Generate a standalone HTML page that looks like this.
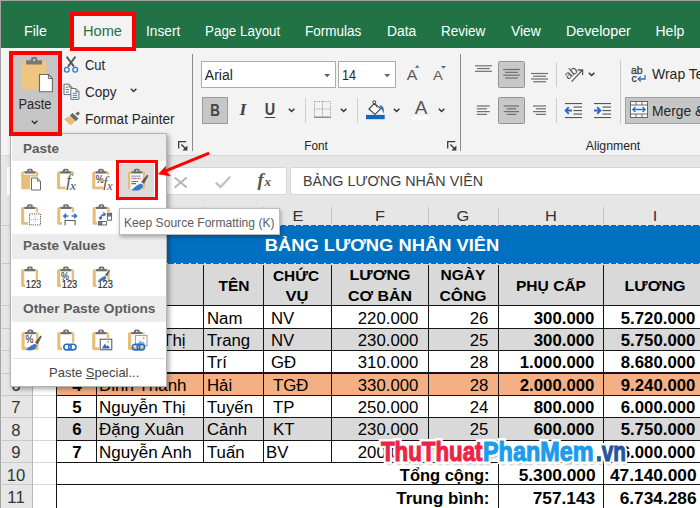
<!DOCTYPE html>
<html lang="vi"><head><meta charset="utf-8"><title>Excel - Paste Keep Source Formatting</title>
<style>
html,body{margin:0;padding:0}
body{width:700px;height:508px;position:relative;overflow:hidden;background:#fff;font-family:"Liberation Sans",sans-serif}
.a{position:absolute}
.t{position:absolute;white-space:nowrap;line-height:1;display:block}
svg{overflow:visible}
</style></head><body>
<div class="a" style="left:0px;top:155px;width:700px;height:50px;background:#e6e6e6;"></div>
<div class="a" style="left:0px;top:205px;width:33px;height:303px;background:#e6e6e6;"></div>
<div class="a" style="left:32px;top:205px;width:1.2px;height:303px;background:#b8b8b8;"></div>
<div class="a" style="left:33px;top:263.4px;width:23px;height:1px;background:#d6d6d6;"></div>
<div class="a" style="left:33px;top:304.9px;width:23px;height:1px;background:#d6d6d6;"></div>
<div class="a" style="left:33px;top:327.7px;width:23px;height:1px;background:#d6d6d6;"></div>
<div class="a" style="left:33px;top:349.9px;width:23px;height:1px;background:#d6d6d6;"></div>
<div class="a" style="left:33px;top:372.5px;width:23px;height:1px;background:#d6d6d6;"></div>
<div class="a" style="left:33px;top:394.9px;width:23px;height:1px;background:#d6d6d6;"></div>
<div class="a" style="left:33px;top:417.2px;width:23px;height:1px;background:#d6d6d6;"></div>
<div class="a" style="left:33px;top:439.6px;width:23px;height:1px;background:#d6d6d6;"></div>
<div class="a" style="left:33px;top:462.0px;width:23px;height:1px;background:#d6d6d6;"></div>
<div class="a" style="left:33px;top:484.4px;width:23px;height:1px;background:#d6d6d6;"></div>
<div class="a" style="left:33px;top:509.5px;width:23px;height:1px;background:#d6d6d6;"></div>
<div class="a" style="left:2px;top:224.8px;width:30px;height:1px;background:#c9c9c9;"></div>
<div class="a" style="left:2px;top:263.4px;width:30px;height:1px;background:#c9c9c9;"></div>
<div class="a" style="left:2px;top:304.9px;width:30px;height:1px;background:#c9c9c9;"></div>
<div class="a" style="left:2px;top:327.7px;width:30px;height:1px;background:#c9c9c9;"></div>
<div class="a" style="left:2px;top:349.9px;width:30px;height:1px;background:#c9c9c9;"></div>
<div class="a" style="left:2px;top:372.5px;width:30px;height:1px;background:#c9c9c9;"></div>
<div class="a" style="left:2px;top:394.9px;width:30px;height:1px;background:#c9c9c9;"></div>
<div class="a" style="left:2px;top:417.2px;width:30px;height:1px;background:#c9c9c9;"></div>
<div class="a" style="left:2px;top:439.6px;width:30px;height:1px;background:#c9c9c9;"></div>
<div class="a" style="left:2px;top:462.0px;width:30px;height:1px;background:#c9c9c9;"></div>
<div class="a" style="left:2px;top:484.4px;width:30px;height:1px;background:#c9c9c9;"></div>
<div class="a" style="left:2px;top:509.5px;width:30px;height:1px;background:#c9c9c9;"></div>
<span class="t" style="top:237.26px;font-size:16px;color:#333;left:16.20px;transform-origin:50% 50%;transform:translateX(-50%) scaleX(1.0400);">1</span>
<span class="t" style="top:277.26px;font-size:16px;color:#333;left:16.20px;transform-origin:50% 50%;transform:translateX(-50%) scaleX(1.0400);">2</span>
<span class="t" style="top:310.96px;font-size:16px;color:#333;left:16.20px;transform-origin:50% 50%;transform:translateX(-50%) scaleX(1.0400);">3</span>
<span class="t" style="top:333.16px;font-size:16px;color:#333;left:16.20px;transform-origin:50% 50%;transform:translateX(-50%) scaleX(1.0400);">4</span>
<span class="t" style="top:355.76px;font-size:16px;color:#333;left:16.20px;transform-origin:50% 50%;transform:translateX(-50%) scaleX(1.0400);">5</span>
<span class="t" style="top:378.16px;font-size:16px;color:#333;left:16.20px;transform-origin:50% 50%;transform:translateX(-50%) scaleX(1.0400);">6</span>
<span class="t" style="top:400.46px;font-size:16px;color:#333;left:16.20px;transform-origin:50% 50%;transform:translateX(-50%) scaleX(1.0400);">7</span>
<span class="t" style="top:422.86px;font-size:16px;color:#333;left:16.20px;transform-origin:50% 50%;transform:translateX(-50%) scaleX(1.0400);">8</span>
<span class="t" style="top:445.26px;font-size:16px;color:#333;left:16.20px;transform-origin:50% 50%;transform:translateX(-50%) scaleX(1.0400);">9</span>
<span class="t" style="top:467.66px;font-size:16px;color:#333;left:16.20px;transform-origin:50% 50%;transform:translateX(-50%) scaleX(1.0400);">10</span>
<span class="t" style="top:489.96px;font-size:16px;color:#333;left:16.20px;transform-origin:50% 50%;transform:translateX(-50%) scaleX(1.0400);">11</span>
<div class="a" style="left:56px;top:225px;width:650px;height:39px;background:#0070c0;"></div>
<span class="t" style="top:236.61px;font-size:17px;color:#fff;font-weight:700;left:381.60px;transform-origin:50% 50%;transform:translateX(-50%) scaleX(1.0782);">BẢNG LƯƠNG NHÂN VIÊN</span>
<div class="a" style="left:56px;top:224.8px;width:650px;height:1.2px;background:repeating-linear-gradient(90deg,#1e7a3c 0 5.5px,#dfeadf 5.5px 7.5px)"></div>
<div class="a" style="left:56px;top:263.3px;width:650px;height:1.2px;background:repeating-linear-gradient(90deg,#1e7a3c 0 5.5px,#dfeadf 5.5px 7.5px)"></div>
<div class="a" style="left:56px;top:264.4px;width:650px;height:41px;background:#d9d9d9;"></div>
<div class="a" style="left:56px;top:328.2px;width:650px;height:22.19999999999999px;background:#d9d9d9;"></div>
<div class="a" style="left:56px;top:373.0px;width:650px;height:22.399999999999977px;background:#f4b084;"></div>
<div class="a" style="left:56px;top:417.7px;width:650px;height:22.400000000000034px;background:#d9d9d9;"></div>
<div class="a" style="left:56px;top:304.79999999999995px;width:650px;height:1.2px;background:#141414;"></div>
<div class="a" style="left:56px;top:327.59999999999997px;width:650px;height:1.2px;background:#141414;"></div>
<div class="a" style="left:56px;top:349.79999999999995px;width:650px;height:1.2px;background:#141414;"></div>
<div class="a" style="left:56px;top:372.4px;width:650px;height:1.2px;background:#141414;"></div>
<div class="a" style="left:56px;top:394.79999999999995px;width:650px;height:1.2px;background:#141414;"></div>
<div class="a" style="left:56px;top:417.09999999999997px;width:650px;height:1.2px;background:#141414;"></div>
<div class="a" style="left:56px;top:439.5px;width:650px;height:1.2px;background:#141414;"></div>
<div class="a" style="left:56px;top:461.9px;width:650px;height:1.2px;background:#141414;"></div>
<div class="a" style="left:56px;top:484.29999999999995px;width:650px;height:1.2px;background:#141414;"></div>
<div class="a" style="left:56px;top:509.4px;width:650px;height:1.2px;background:#141414;"></div>
<div class="a" style="left:55.9px;top:264.5px;width:1.2px;height:198.0px;background:#141414;"></div>
<div class="a" style="left:95.9px;top:264.5px;width:1.2px;height:198.0px;background:#141414;"></div>
<div class="a" style="left:203.0px;top:264.5px;width:1.2px;height:198.0px;background:#141414;"></div>
<div class="a" style="left:262.9px;top:264.5px;width:1.2px;height:198.0px;background:#141414;"></div>
<div class="a" style="left:330.79999999999995px;top:264.5px;width:1.2px;height:198.0px;background:#141414;"></div>
<div class="a" style="left:428.0px;top:264.5px;width:1.2px;height:198.0px;background:#141414;"></div>
<div class="a" style="left:498.2px;top:264.5px;width:1.2px;height:198.0px;background:#141414;"></div>
<div class="a" style="left:602.9px;top:264.5px;width:1.2px;height:198.0px;background:#141414;"></div>
<div class="a" style="left:55.9px;top:462.5px;width:1.2px;height:47.5px;background:#141414;"></div>
<div class="a" style="left:498.2px;top:462.5px;width:1.2px;height:47.5px;background:#141414;"></div>
<div class="a" style="left:602.9px;top:462.5px;width:1.2px;height:47.5px;background:#141414;"></div>
<span class="t" style="top:278.20px;font-size:15px;color:#000;font-weight:700;left:233.50px;transform-origin:50% 50%;transform:translateX(-50%) scaleX(1.0333);">TÊN</span>
<span class="t" style="top:267.70px;font-size:15px;color:#000;font-weight:700;left:296.30px;transform-origin:50% 50%;transform:translateX(-50%) scaleX(1.0233);">CHỨC</span>
<span class="t" style="top:288.00px;font-size:15px;color:#000;font-weight:700;left:297.00px;transform-origin:50% 50%;transform:translateX(-50%) scaleX(1.1034);">VỤ</span>
<span class="t" style="top:267.30px;font-size:15px;color:#000;font-weight:700;left:379.50px;transform-origin:50% 50%;transform:translateX(-50%) scaleX(1.0719);">LƯƠNG</span>
<span class="t" style="top:288.30px;font-size:15px;color:#000;font-weight:700;left:379.50px;transform-origin:50% 50%;transform:translateX(-50%) scaleX(1.0614);">CƠ BẢN</span>
<span class="t" style="top:267.30px;font-size:15px;color:#000;font-weight:700;left:463.00px;transform-origin:50% 50%;transform:translateX(-50%) scaleX(1.0382);">NGÀY</span>
<span class="t" style="top:288.30px;font-size:15px;color:#000;font-weight:700;left:463.00px;transform-origin:50% 50%;transform:translateX(-50%) scaleX(1.0444);">CÔNG</span>
<span class="t" style="top:278.30px;font-size:15px;color:#000;font-weight:700;left:551.00px;transform-origin:50% 50%;transform:translateX(-50%) scaleX(1.0368);">PHỤ CẤP</span>
<span class="t" style="top:278.30px;font-size:15px;color:#000;font-weight:700;left:655.00px;transform-origin:50% 50%;transform:translateX(-50%) scaleX(1.0719);">LƯƠNG</span>
<span class="t" style="top:310.59px;font-size:15.6px;color:#000;font-weight:700;left:76.50px;transform-origin:50% 50%;transform:translateX(-50%) scaleX(1.0750);">1</span>
<span class="t" style="top:310.59px;font-size:15.6px;color:#000;left:98.60px;transform-origin:0 50%;transform:scaleX(1.0900);">Lê Văn</span>
<span class="t" style="top:310.59px;font-size:15.6px;color:#000;left:206.80px;transform-origin:0 50%;transform:scaleX(1.0750);">Nam</span>
<span class="t" style="top:310.59px;font-size:15.6px;color:#000;left:271.40px;transform-origin:0 50%;transform:scaleX(1.0750);">NV</span>
<span class="t" style="top:310.59px;font-size:15.6px;color:#000;right:281.80px;transform-origin:100% 50%;transform:scaleX(1.0750);">220.000</span>
<span class="t" style="top:310.59px;font-size:15.6px;color:#000;right:211.80px;transform-origin:100% 50%;transform:scaleX(1.0750);">26</span>
<span class="t" style="top:310.59px;font-size:15.6px;color:#000;font-weight:700;right:105.20px;transform-origin:100% 50%;transform:scaleX(1.0750);">300.000</span>
<span class="t" style="top:310.59px;font-size:15.6px;color:#000;font-weight:700;right:4.60px;transform-origin:100% 50%;transform:scaleX(1.0750);">5.720.000</span>
<span class="t" style="top:332.79px;font-size:15.6px;color:#000;font-weight:700;left:76.50px;transform-origin:50% 50%;transform:translateX(-50%) scaleX(1.0750);">2</span>
<span class="t" style="top:332.79px;font-size:15.6px;color:#000;left:98.60px;transform-origin:0 50%;transform:scaleX(1.0900);">Nguyễn Thị</span>
<span class="t" style="top:332.79px;font-size:15.6px;color:#000;left:206.80px;transform-origin:0 50%;transform:scaleX(1.0750);">Trang</span>
<span class="t" style="top:332.79px;font-size:15.6px;color:#000;left:271.40px;transform-origin:0 50%;transform:scaleX(1.0750);">NV</span>
<span class="t" style="top:332.79px;font-size:15.6px;color:#000;right:281.80px;transform-origin:100% 50%;transform:scaleX(1.0750);">230.000</span>
<span class="t" style="top:332.79px;font-size:15.6px;color:#000;right:211.80px;transform-origin:100% 50%;transform:scaleX(1.0750);">25</span>
<span class="t" style="top:332.79px;font-size:15.6px;color:#000;font-weight:700;right:105.20px;transform-origin:100% 50%;transform:scaleX(1.0750);">300.000</span>
<span class="t" style="top:332.79px;font-size:15.6px;color:#000;font-weight:700;right:4.60px;transform-origin:100% 50%;transform:scaleX(1.0750);">5.750.000</span>
<span class="t" style="top:355.39px;font-size:15.6px;color:#000;font-weight:700;left:76.50px;transform-origin:50% 50%;transform:translateX(-50%) scaleX(1.0750);">3</span>
<span class="t" style="top:355.39px;font-size:15.6px;color:#000;left:98.60px;transform-origin:0 50%;transform:scaleX(1.0900);">Lê Minh</span>
<span class="t" style="top:355.39px;font-size:15.6px;color:#000;left:206.80px;transform-origin:0 50%;transform:scaleX(1.0750);">Trí</span>
<span class="t" style="top:355.39px;font-size:15.6px;color:#000;left:271.40px;transform-origin:0 50%;transform:scaleX(1.0750);">GĐ</span>
<span class="t" style="top:355.39px;font-size:15.6px;color:#000;right:281.80px;transform-origin:100% 50%;transform:scaleX(1.0750);">310.000</span>
<span class="t" style="top:355.39px;font-size:15.6px;color:#000;right:211.80px;transform-origin:100% 50%;transform:scaleX(1.0750);">28</span>
<span class="t" style="top:355.39px;font-size:15.6px;color:#000;font-weight:700;right:105.20px;transform-origin:100% 50%;transform:scaleX(1.0750);">1.000.000</span>
<span class="t" style="top:355.39px;font-size:15.6px;color:#000;font-weight:700;right:4.60px;transform-origin:100% 50%;transform:scaleX(1.0750);">8.680.000</span>
<span class="t" style="top:377.79px;font-size:15.6px;color:#000;font-weight:700;left:76.50px;transform-origin:50% 50%;transform:translateX(-50%) scaleX(1.0750);">4</span>
<span class="t" style="top:377.79px;font-size:15.6px;color:#000;left:98.60px;transform-origin:0 50%;transform:scaleX(1.0900);">Đinh Thanh</span>
<span class="t" style="top:377.79px;font-size:15.6px;color:#000;left:206.80px;transform-origin:0 50%;transform:scaleX(1.0750);">Hải</span>
<span class="t" style="top:377.79px;font-size:15.6px;color:#000;left:273.40px;transform-origin:0 50%;transform:scaleX(1.0750);">TGĐ</span>
<span class="t" style="top:377.79px;font-size:15.6px;color:#000;right:281.80px;transform-origin:100% 50%;transform:scaleX(1.0750);">330.000</span>
<span class="t" style="top:377.79px;font-size:15.6px;color:#000;right:211.80px;transform-origin:100% 50%;transform:scaleX(1.0750);">28</span>
<span class="t" style="top:377.79px;font-size:15.6px;color:#000;font-weight:700;right:105.20px;transform-origin:100% 50%;transform:scaleX(1.0750);">2.000.000</span>
<span class="t" style="top:377.79px;font-size:15.6px;color:#000;font-weight:700;right:4.60px;transform-origin:100% 50%;transform:scaleX(1.0750);">9.240.000</span>
<span class="t" style="top:400.09px;font-size:15.6px;color:#000;font-weight:700;left:76.50px;transform-origin:50% 50%;transform:translateX(-50%) scaleX(1.0750);">5</span>
<span class="t" style="top:400.09px;font-size:15.6px;color:#000;left:98.60px;transform-origin:0 50%;transform:scaleX(1.0900);">Nguyễn Thị</span>
<span class="t" style="top:400.09px;font-size:15.6px;color:#000;left:206.80px;transform-origin:0 50%;transform:scaleX(1.0750);">Tuyến</span>
<span class="t" style="top:400.09px;font-size:15.6px;color:#000;left:272.90px;transform-origin:0 50%;transform:scaleX(1.0750);">TP</span>
<span class="t" style="top:400.09px;font-size:15.6px;color:#000;right:281.80px;transform-origin:100% 50%;transform:scaleX(1.0750);">250.000</span>
<span class="t" style="top:400.09px;font-size:15.6px;color:#000;right:211.80px;transform-origin:100% 50%;transform:scaleX(1.0750);">24</span>
<span class="t" style="top:400.09px;font-size:15.6px;color:#000;font-weight:700;right:105.20px;transform-origin:100% 50%;transform:scaleX(1.0750);">800.000</span>
<span class="t" style="top:400.09px;font-size:15.6px;color:#000;font-weight:700;right:4.60px;transform-origin:100% 50%;transform:scaleX(1.0750);">6.000.000</span>
<span class="t" style="top:422.49px;font-size:15.6px;color:#000;font-weight:700;left:76.50px;transform-origin:50% 50%;transform:translateX(-50%) scaleX(1.0750);">6</span>
<span class="t" style="top:422.49px;font-size:15.6px;color:#000;left:98.60px;transform-origin:0 50%;transform:scaleX(1.0900);">Đặng Xuân</span>
<span class="t" style="top:422.49px;font-size:15.6px;color:#000;left:206.80px;transform-origin:0 50%;transform:scaleX(1.0750);">Cảnh</span>
<span class="t" style="top:422.49px;font-size:15.6px;color:#000;left:272.90px;transform-origin:0 50%;transform:scaleX(1.0750);">KT</span>
<span class="t" style="top:422.49px;font-size:15.6px;color:#000;right:281.80px;transform-origin:100% 50%;transform:scaleX(1.0750);">230.000</span>
<span class="t" style="top:422.49px;font-size:15.6px;color:#000;right:211.80px;transform-origin:100% 50%;transform:scaleX(1.0750);">25</span>
<span class="t" style="top:422.49px;font-size:15.6px;color:#000;font-weight:700;right:105.20px;transform-origin:100% 50%;transform:scaleX(1.0750);">600.000</span>
<span class="t" style="top:422.49px;font-size:15.6px;color:#000;font-weight:700;right:4.60px;transform-origin:100% 50%;transform:scaleX(1.0750);">5.750.000</span>
<span class="t" style="top:444.89px;font-size:15.6px;color:#000;font-weight:700;left:76.50px;transform-origin:50% 50%;transform:translateX(-50%) scaleX(1.0750);">7</span>
<span class="t" style="top:444.89px;font-size:15.6px;color:#000;left:98.60px;transform-origin:0 50%;transform:scaleX(1.0900);">Nguyễn Anh</span>
<span class="t" style="top:444.89px;font-size:15.6px;color:#000;left:206.80px;transform-origin:0 50%;transform:scaleX(1.0750);">Tuấn</span>
<span class="t" style="top:444.89px;font-size:15.6px;color:#000;left:266.40px;transform-origin:0 50%;transform:scaleX(1.0750);">BV</span>
<span class="t" style="top:444.89px;font-size:15.6px;color:#000;right:281.80px;transform-origin:100% 50%;transform:scaleX(1.0750);">200.000</span>
<span class="t" style="top:444.89px;font-size:15.6px;color:#000;right:211.80px;transform-origin:100% 50%;transform:scaleX(1.0750);">27</span>
<span class="t" style="top:444.89px;font-size:15.6px;color:#000;font-weight:700;right:105.20px;transform-origin:100% 50%;transform:scaleX(1.0750);">300.000</span>
<span class="t" style="top:444.89px;font-size:15.6px;color:#000;font-weight:700;right:4.60px;transform-origin:100% 50%;transform:scaleX(1.0750);">6.000.000</span>
<span class="t" style="top:467.27px;font-size:16.1px;color:#000;font-weight:700;right:210.20px;transform-origin:100% 50%;transform:scaleX(1.0250);">Tổng cộng:</span>
<span class="t" style="top:467.27px;font-size:16.1px;color:#000;font-weight:700;right:104.80px;transform-origin:100% 50%;transform:scaleX(1.0750);">5.300.000</span>
<span class="t" style="top:467.27px;font-size:16.1px;color:#000;font-weight:700;right:3.20px;transform-origin:100% 50%;transform:scaleX(1.0750);">47.140.000</span>
<span class="t" style="top:489.67px;font-size:16.1px;color:#000;font-weight:700;right:210.20px;transform-origin:100% 50%;transform:scaleX(1.0542);">Trung bình:</span>
<span class="t" style="top:489.67px;font-size:16.1px;color:#000;font-weight:700;right:104.80px;transform-origin:100% 50%;transform:scaleX(1.0750);">757.143</span>
<span class="t" style="top:489.67px;font-size:16.1px;color:#000;font-weight:700;right:3.20px;transform-origin:100% 50%;transform:scaleX(1.0750);">6.734.286</span>
<div class="a" style="left:0px;top:204px;width:700px;height:21px;background:#e6e6e6;"></div>
<div class="a" style="left:56.0px;top:207px;width:1px;height:17px;background:#c4c4c4;"></div>
<div class="a" style="left:96.0px;top:207px;width:1px;height:17px;background:#c4c4c4;"></div>
<div class="a" style="left:203.1px;top:207px;width:1px;height:17px;background:#c4c4c4;"></div>
<div class="a" style="left:263.0px;top:207px;width:1px;height:17px;background:#c4c4c4;"></div>
<div class="a" style="left:330.9px;top:207px;width:1px;height:17px;background:#c4c4c4;"></div>
<div class="a" style="left:428.1px;top:207px;width:1px;height:17px;background:#c4c4c4;"></div>
<div class="a" style="left:498.3px;top:207px;width:1px;height:17px;background:#c4c4c4;"></div>
<div class="a" style="left:603.0px;top:207px;width:1px;height:17px;background:#c4c4c4;"></div>
<span class="t" style="top:207.88px;font-size:15.5px;color:#333;left:297.50px;transform-origin:50% 50%;transform:translateX(-50%) scaleX(1.0600);">E</span>
<span class="t" style="top:207.88px;font-size:15.5px;color:#333;left:379.50px;transform-origin:50% 50%;transform:translateX(-50%) scaleX(1.0600);">F</span>
<span class="t" style="top:207.88px;font-size:15.5px;color:#333;left:463.00px;transform-origin:50% 50%;transform:translateX(-50%) scaleX(1.0600);">G</span>
<span class="t" style="top:207.88px;font-size:15.5px;color:#333;left:551.00px;transform-origin:50% 50%;transform:translateX(-50%) scaleX(1.0600);">H</span>
<span class="t" style="top:207.88px;font-size:15.5px;color:#333;left:655.00px;transform-origin:50% 50%;transform:translateX(-50%) scaleX(1.0600);">I</span>
<span class="t" style="top:207.88px;font-size:15.5px;color:#333;left:233.50px;transform-origin:50% 50%;transform:translateX(-50%) scaleX(1.0600);">D</span>
<div class="a" style="left:7px;top:166.9px;width:160px;height:28.2px;background:#fff;"></div>
<div class="a" style="left:160px;top:166.9px;width:127.4px;height:28.2px;background:#fff;border:1px solid #d6d6d6;box-sizing:border-box;border-radius:2px;"></div>
<div class="a" style="left:290px;top:166.9px;width:420px;height:28.2px;background:#fff;border:1px solid #d6d6d6;box-sizing:border-box;border-radius:2px;"></div>
<span class="t" style="top:174.17px;font-size:14.8px;color:#404040;left:303.20px;transform-origin:0 50%;transform:scaleX(0.9652);">BẢNG LƯƠNG NHÂN VIÊN</span>
<svg class="a" style="left:174px;top:176.8px;" width="13.4" height="10.8" viewBox="0 0 13.4 10.8"><path d="M0.7 0.4 L12.7 10.4 M12.7 0.4 L0.7 10.4" stroke="#b6b6b6" stroke-width="2" fill="none"/></svg>
<svg class="a" style="left:215.3px;top:176px;" width="16" height="12.2" viewBox="0 0 16 12.2"><path d="M0.8 6.6 L5.6 11 L15.2 0.8" stroke="#c2c2c2" stroke-width="2.4" fill="none"/></svg>
<span class="t" style="top:170.54px;font-size:18.5px;color:#555;font-weight:700;font-family:'Liberation Serif',serif;font-style:italic;left:257.60px;transform-origin:0 50%;">f</span>
<span class="t" style="top:175.40px;font-size:13px;color:#555;font-weight:700;font-family:'Liberation Serif',serif;font-style:italic;left:264.60px;transform-origin:0 50%;">x</span>
<div class="a" style="left:0px;top:0px;width:700px;height:48.6px;background:#217346;"></div>
<div class="a" style="left:0px;top:48px;width:700px;height:107px;background:#f3f3f3;"></div>
<div class="a" style="left:0px;top:155px;width:700px;height:1px;background:#d8d8d8;"></div>
<span class="t" style="top:23.65px;font-size:14px;color:#fff;left:23.50px;transform-origin:0 50%;transform:scaleX(1.0105);">File</span>
<span class="t" style="top:23.65px;font-size:14px;color:#fff;left:146.00px;transform-origin:0 50%;transform:scaleX(0.9796);">Insert</span>
<span class="t" style="top:23.65px;font-size:14px;color:#fff;left:205.00px;transform-origin:0 50%;transform:scaleX(0.9577);">Page Layout</span>
<span class="t" style="top:23.65px;font-size:14px;color:#fff;left:305.00px;transform-origin:0 50%;transform:scaleX(0.9647);">Formulas</span>
<span class="t" style="top:23.65px;font-size:14px;color:#fff;left:387.00px;transform-origin:0 50%;transform:scaleX(0.9906);">Data</span>
<span class="t" style="top:23.65px;font-size:14px;color:#fff;left:441.00px;transform-origin:0 50%;transform:scaleX(0.9650);">Review</span>
<span class="t" style="top:23.65px;font-size:14px;color:#fff;left:510.50px;transform-origin:0 50%;transform:scaleX(0.9902);">View</span>
<span class="t" style="top:23.65px;font-size:14px;color:#fff;left:565.50px;transform-origin:0 50%;transform:scaleX(1.0152);">Developer</span>
<span class="t" style="top:23.65px;font-size:14px;color:#fff;left:655.50px;transform-origin:0 50%;">Help</span>
<div class="a" style="left:70px;top:12px;width:66px;height:38px;background:#f3f3f3;"></div>
<span class="t" style="top:23.65px;font-size:14px;color:#217346;left:83.00px;transform-origin:0 50%;transform:scaleX(1.0439);">Home</span>
<div class="a" style="left:13px;top:54.5px;width:45px;height:78px;background:#c6c6c6;"></div>
<span class="t" style="top:97.45px;font-size:14px;color:#262626;left:35.00px;transform-origin:50% 50%;transform:translateX(-50%) scaleX(0.9215);">Paste</span>
<svg class="a" style="left:30.6px;top:119.9px;" width="7.2" height="4.4" viewBox="0 0 7.2 4.4"><path d="M0.8 0.8 L3.6 3.6 L6.4 0.8" stroke="#333" stroke-width="1.45" fill="none"/></svg>
<span class="t" style="top:58.15px;font-size:14px;color:#262626;left:85.00px;transform-origin:0 50%;transform:scaleX(0.9267);">Cut</span>
<span class="t" style="top:85.45px;font-size:14px;color:#262626;left:85.00px;transform-origin:0 50%;transform:scaleX(0.9667);">Copy</span>
<svg class="a" style="left:130.0px;top:88.2px;" width="7.2" height="4.4" viewBox="0 0 7.2 4.4"><path d="M0.8 0.8 L3.6 3.6 L6.4 0.8" stroke="#333" stroke-width="1.45" fill="none"/></svg>
<span class="t" style="top:111.75px;font-size:14px;color:#262626;left:85.00px;transform-origin:0 50%;transform:scaleX(0.9677);">Format Painter</span>
<svg class="a" style="left:178px;top:141px;" width="10" height="10" viewBox="0 0 10 10"><path d="M0.7 7.6 V0.7 H8.2" stroke="#3a3a3a" stroke-width="1.3" fill="none"/><path d="M3.4 3.4 L8.4 8.4" stroke="#3a3a3a" stroke-width="1.4" fill="none"/><path d="M9.4 4.4 V9.4 H4.4Z" fill="#3a3a3a"/></svg>
<svg class="a" style="left:447px;top:141px;" width="10" height="10" viewBox="0 0 10 10"><path d="M0.7 7.6 V0.7 H8.2" stroke="#3a3a3a" stroke-width="1.3" fill="none"/><path d="M3.4 3.4 L8.4 8.4" stroke="#3a3a3a" stroke-width="1.4" fill="none"/><path d="M9.4 4.4 V9.4 H4.4Z" fill="#3a3a3a"/></svg>
<div class="a" style="left:191.5px;top:53.5px;width:1.2px;height:97px;background:#8a8a8a;"></div>
<div class="a" style="left:460.3px;top:53.5px;width:1.2px;height:97px;background:#8a8a8a;"></div>
<div class="a" style="left:201px;top:61px;width:134.5px;height:26.5px;background:#fff;border:1px solid #ababab;box-sizing:border-box;"></div>
<div class="a" style="left:338px;top:61px;width:58px;height:26.5px;background:#fff;border:1px solid #ababab;box-sizing:border-box;"></div>
<span class="t" style="top:67.65px;font-size:14px;color:#262626;left:204.80px;transform-origin:0 50%;">Arial</span>
<span class="t" style="top:67.65px;font-size:14px;color:#262626;left:342.00px;transform-origin:0 50%;transform:scaleX(0.8987);">14</span>
<svg class="a" style="left:323.5px;top:73.5px;" width="6.4" height="3.4" viewBox="0 0 6.4 3.4"><path d="M0.2 0 H6.2 L3.2 3.2 Z" fill="#606060"/></svg>
<svg class="a" style="left:384px;top:73.5px;" width="6.4" height="3.4" viewBox="0 0 6.4 3.4"><path d="M0.2 0 H6.2 L3.2 3.2 Z" fill="#606060"/></svg>
<div class="a" style="left:201.6px;top:97px;width:26.6px;height:27px;background:#c6c6c6;border:1px solid #9c9c9c;box-sizing:border-box;"></div>
<span class="t" style="top:101.81px;font-size:17px;color:#444;font-weight:700;left:214.80px;transform-origin:50% 50%;transform:translateX(-50%) scaleX(0.7817);">B</span>
<span class="t" style="top:101.39px;font-size:17.5px;color:#444;font-family:'Liberation Serif',serif;font-style:italic;font-weight:700;left:243.00px;transform-origin:50% 50%;transform:translateX(-50%);">I</span>
<span class="t" style="top:101.66px;font-size:16px;color:#444;font-weight:700;text-decoration:underline;text-decoration-thickness:1.3px;text-underline-offset:2px;left:270.00px;transform-origin:50% 50%;transform:translateX(-50%) scaleX(0.8995);">U</span>
<svg class="a" style="left:288.0px;top:108.2px;" width="7.2" height="4.4" viewBox="0 0 7.2 4.4"><path d="M0.8 0.8 L3.6 3.6 L6.4 0.8" stroke="#333" stroke-width="1.45" fill="none"/></svg>
<div class="a" style="left:305px;top:98.2px;width:1px;height:24.6px;background:#cfcfcf;"></div>
<svg class="a" style="left:340.3px;top:108.2px;" width="7.2" height="4.4" viewBox="0 0 7.2 4.4"><path d="M0.8 0.8 L3.6 3.6 L6.4 0.8" stroke="#333" stroke-width="1.45" fill="none"/></svg>
<div class="a" style="left:357px;top:98.2px;width:1px;height:24.6px;background:#cfcfcf;"></div>
<svg class="a" style="left:392.5px;top:108.2px;" width="7.2" height="4.4" viewBox="0 0 7.2 4.4"><path d="M0.8 0.8 L3.6 3.6 L6.4 0.8" stroke="#333" stroke-width="1.45" fill="none"/></svg>
<svg class="a" style="left:438.0px;top:108.2px;" width="7.2" height="4.4" viewBox="0 0 7.2 4.4"><path d="M0.8 0.8 L3.6 3.6 L6.4 0.8" stroke="#333" stroke-width="1.45" fill="none"/></svg>
<span class="t" style="top:139.84px;font-size:12px;color:#262626;left:316.00px;transform-origin:50% 50%;transform:translateX(-50%) scaleX(0.9785);">Font</span>
<svg class="a" style="left:314px;top:101.2px;" width="17" height="17" viewBox="0 0 17 17"><g stroke="#9a9a9a" stroke-width="1" stroke-dasharray="1.1 1.1" fill="none"><path d="M0.5 0.5 H16.5 V15.5 M0.5 0.5 V15.5 M8.5 0.5 V15.5 M0.5 8 H16.5"/></g><path d="M0 16.2 H17" stroke="#6a6a6a" stroke-width="1.1"/></svg>
<svg class="a" style="left:0px;top:0px;" width="700" height="508" viewBox="0 0 700 508"><path d="M368.9 109 L374.4 103.4 L380.7 108.6 L375 114.4Z" fill="#fff" stroke="#444" stroke-width="1.1" stroke-linejoin="round"/>
<circle cx="374.3" cy="102.2" r="1.5" fill="none" stroke="#444" stroke-width="1"/>
<path d="M374.7 103.6 L377.2 107.4" stroke="#444" stroke-width="1"/>
<path d="M379.4 105.2 C383.2 105.4 384.8 109 383.5 113.8 C382.8 110.8 381.8 109.6 380.8 108.6Z" fill="#1f6fc5"/>
<rect x="366" y="114.9" width="18.7" height="4.3" fill="#1565c0"/></svg>
<span class="t" style="top:99.69px;font-size:17.5px;color:#555;left:420.70px;transform-origin:50% 50%;transform:translateX(-50%) scaleX(1.0781);">A</span>
<div class="a" style="left:411.5px;top:115.5px;width:18.5px;height:4.3px;background:#fff;"></div>
<span class="t" style="top:66.88px;font-size:15.5px;color:#5a5a5a;left:411.60px;transform-origin:50% 50%;transform:translateX(-50%) scaleX(1.0248);">A</span>
<svg class="a" style="left:415.2px;top:64.5px;" width="4.4" height="2.8" viewBox="0 0 4.4 2.8"><path d="M0 2.8 L2.2 0 L4.4 2.8Z" fill="#2b73c0"/></svg>
<span class="t" style="top:68.57px;font-size:13.5px;color:#5a5a5a;left:438.30px;transform-origin:50% 50%;transform:translateX(-50%) scaleX(1.0870);">A</span>
<svg class="a" style="left:441.2px;top:66.4px;" width="5" height="2.8" viewBox="0 0 5 2.8"><path d="M0 0 L2.5 2.8 L5 0Z" fill="#2b73c0"/></svg>
<div class="a" style="left:498px;top:60.8px;width:26.8px;height:27px;background:#c8c8c8;border:1px solid #939393;box-sizing:border-box;border-radius:1.5px;"></div>
<div class="a" style="left:498px;top:97px;width:26.8px;height:27.2px;background:#c8c8c8;border:1px solid #939393;box-sizing:border-box;border-radius:1.5px;"></div>
<svg class="a" style="left:0px;top:0px;" width="700" height="508" viewBox="0 0 700 508"><rect x="475" y="65.20" width="16.90" height="1.2" fill="#707070"/><rect x="477.1" y="67.95" width="12.70" height="1.2" fill="#707070"/><rect x="475" y="70.70" width="16.90" height="1.2" fill="#707070"/><rect x="503.1" y="68.90" width="16.90" height="1.2" fill="#707070"/><rect x="505.2" y="71.75" width="12.70" height="1.2" fill="#707070"/><rect x="503.1" y="74.60" width="16.90" height="1.2" fill="#707070"/><rect x="505.2" y="77.45" width="12.70" height="1.2" fill="#707070"/><rect x="531" y="72.90" width="17.00" height="1.2" fill="#707070"/><rect x="533.1" y="75.65" width="12.90" height="1.2" fill="#707070"/><rect x="531" y="78.40" width="17.00" height="1.2" fill="#707070"/><rect x="533.1" y="81.15" width="12.90" height="1.2" fill="#707070"/><rect x="476.8" y="105.40" width="13.00" height="1.2" fill="#707070"/><rect x="476.8" y="108.20" width="10.10" height="1.2" fill="#707070"/><rect x="476.8" y="111.00" width="13.00" height="1.2" fill="#707070"/><rect x="476.8" y="113.80" width="10.10" height="1.2" fill="#707070"/><rect x="503.7" y="105.40" width="15.30" height="1.2" fill="#707070"/><rect x="506.8" y="108.20" width="9.50" height="1.2" fill="#707070"/><rect x="503.7" y="111.00" width="15.30" height="1.2" fill="#707070"/><rect x="506.8" y="113.80" width="9.50" height="1.2" fill="#707070"/><rect x="533" y="105.40" width="13.00" height="1.2" fill="#707070"/><rect x="535.9" y="108.20" width="10.10" height="1.2" fill="#707070"/><rect x="533" y="111.00" width="13.00" height="1.2" fill="#707070"/><rect x="535.9" y="113.80" width="10.10" height="1.2" fill="#707070"/></svg>
<div class="a" style="left:556.1px;top:61.6px;width:1px;height:25.2px;background:#cdcdcd;"></div>
<div class="a" style="left:556.1px;top:98.1px;width:1px;height:25px;background:#cdcdcd;"></div>
<div class="a" style="left:620px;top:60px;width:1px;height:64px;background:#c8c8c8;"></div>
<svg class="a" style="left:0px;top:0px;" width="700" height="508" viewBox="0 0 700 508"><text x="566.6" y="79.2" font-size="12" fill="#4a4a4a" transform="rotate(-40 568.4 77.6)" font-family="Liberation Sans,sans-serif">ab</text><path d="M571.6 81.6 L582.2 70.4 M577.6 70 H582.6 V75" stroke="#555" stroke-width="1.3" fill="none"/></svg>
<svg class="a" style="left:588.4px;top:72.3px;" width="7.2" height="4.4" viewBox="0 0 7.2 4.4"><path d="M0.8 0.8 L3.6 3.6 L6.4 0.8" stroke="#333" stroke-width="1.45" fill="none"/></svg>
<svg class="a" style="left:565.3px;top:102.8px;" width="17" height="15.5" viewBox="0 0 17 15.5"><rect x="0" y="0.0" width="17" height="1.1" fill="#555"/><rect x="8.5" y="3.5" width="8.5" height="1.1" fill="#555"/><rect x="8.5" y="7.0" width="8.5" height="1.1" fill="#555"/><rect x="8.5" y="10.5" width="8.5" height="1.1" fill="#555"/><rect x="0" y="14.0" width="17" height="1.1" fill="#555"/><path d="M0.8 7.5 H7 M3.8 4.2 L0.6 7.5 L3.8 10.8" stroke="#2b6cc4" stroke-width="1.9" fill="none"/></svg>
<svg class="a" style="left:593.7px;top:102.8px;" width="17" height="15.5" viewBox="0 0 17 15.5"><rect x="0" y="0.0" width="17" height="1.1" fill="#555"/><rect x="8.5" y="3.5" width="8.5" height="1.1" fill="#555"/><rect x="8.5" y="7.0" width="8.5" height="1.1" fill="#555"/><rect x="8.5" y="10.5" width="8.5" height="1.1" fill="#555"/><rect x="0" y="14.0" width="17" height="1.1" fill="#555"/><path d="M0 7.5 H6.2 M3.2 4.2 L6.4 7.5 L3.2 10.8" stroke="#2b6cc4" stroke-width="1.9" fill="none"/></svg>
<svg class="a" style="left:631px;top:66.5px;" width="16" height="16" viewBox="0 0 16 16"><text x="0" y="7" font-size="10.5" fill="#333" stroke="#333" stroke-width="0.25" font-family="Liberation Sans,sans-serif">ab</text><text x="0.4" y="15.2" font-size="10.5" fill="#333" stroke="#333" stroke-width="0.25" font-family="Liberation Sans,sans-serif">c</text><path d="M14 8 V12 H7.5 M9.8 9.6 L7.2 12 L9.8 14.4" stroke="#2b73c0" stroke-width="1.3" fill="none"/></svg>
<span class="t" style="top:67.43px;font-size:14.5px;color:#262626;left:651.50px;transform-origin:0 50%;transform:scaleX(0.9653);">Wrap Text</span>
<div class="a" style="left:625.3px;top:97.3px;width:80px;height:26.5px;background:#c6c6c6;border:1px solid #a0a0a0;box-sizing:border-box;"></div>
<svg class="a" style="left:629.5px;top:101.3px;" width="18" height="17" viewBox="0 0 18 17"><rect x="0.5" y="0.5" width="17" height="16" fill="#fff" stroke="#666"/><path d="M0.5 4 H17.5 M0.5 13 H17.5 M6 0.5 V4 M12 0.5 V4 M6 13 V16.5 M12 13 V16.5" stroke="#666" fill="none"/><path d="M3 8.5 H15 M5.4 6 L2.8 8.5 L5.4 11 M12.6 6 L15.2 8.5 L12.6 11" stroke="#2b73c0" stroke-width="1.3" fill="none"/></svg>
<span class="t" style="top:104.03px;font-size:14.5px;color:#262626;left:652.00px;transform-origin:0 50%;transform:scaleX(0.9525);">Merge &amp; Center</span>
<span class="t" style="top:139.84px;font-size:12px;color:#262626;left:613.30px;transform-origin:50% 50%;transform:translateX(-50%) scaleX(1.0211);">Alignment</span>
<svg class="a" style="left:0px;top:0px;" width="700" height="508" viewBox="0 0 700 508">
<rect x="21.6" y="60.8" width="24.8" height="28.8" rx="1.2" fill="#eec682"/>
<rect x="31" y="57" width="6.3" height="5" rx="1.6" fill="#787878"/>
<rect x="26" y="60.2" width="16" height="4.4" rx="0.9" fill="#787878"/>
<rect x="33.1" y="58.9" width="2.2" height="2.2" fill="#c6c6c6"/>
<path d="M39.5 74.5 H48.4 L52.4 78.5 V91.8 H39.5Z" fill="#fff" stroke="#6a6a6a" stroke-width="1.1" stroke-linejoin="round"/>
<path d="M48.4 74.7 V78.5 H52.2" fill="none" stroke="#6a6a6a" stroke-width="1"/>
<path d="M66.6 56.6 L74 66.6 M75.4 56.6 L68 66.6" stroke="#555" stroke-width="1.8" fill="none"/>
<circle cx="66.8" cy="69.7" r="2.4" fill="none" stroke="#3a76c4" stroke-width="1.3"/>
<circle cx="75.2" cy="69.7" r="2.4" fill="none" stroke="#3a76c4" stroke-width="1.3"/>
<path d="M64 84.2 H69 L72 87.2 V94.6 H64Z" fill="#fff" stroke="#6a6a6a" stroke-width="1"/>
<path d="M69 84.4 V87.2 H71.8" fill="none" stroke="#6a6a6a" stroke-width="0.9"/>
<path d="M70.9 88.5 H75.9 L78.9 91.6 V99.3 H70.9Z" fill="#fff" stroke="#6a6a6a" stroke-width="1"/>
<path d="M75.9 88.7 V91.6 H78.7" fill="none" stroke="#6a6a6a" stroke-width="0.9"/>
<path d="M65.6 87.2 H68 M65.6 89.6 H69 M65.6 92 H69 M72.6 93.2 H77.2 M72.6 95.3 H77.2 M72.6 97.4 H77.2" stroke="#3a76c4" stroke-width="1"/>
<path d="M64 119 L69.9 115.9 L75.6 121 L70.4 125.4Z" fill="#e9bd78"/>
<path d="M69.8 115.6 L72.6 113 L78.4 118.6 L75.8 121.2Z" fill="#666"/>
<path d="M75.4 113.6 L78 111.4 L80 113.4 L77.6 115.8Z" fill="#666"/>
</svg>
<div class="a" style="left:9.9px;top:132.6px;width:156.8px;height:254.6px;background:#fff;border:1px solid #b4b4b4;box-sizing:border-box;box-shadow:2px 2px 5px rgba(0,0,0,0.35)"></div>
<div class="a" style="left:11.5px;top:133.6px;width:154.2px;height:27.8px;background:#ececec;"></div>
<span class="t" style="top:142.00px;font-size:13px;color:#5c5c5c;font-weight:700;left:22.60px;transform-origin:0 50%;transform:scaleX(1.0374);">Paste</span>
<div class="a" style="left:11.5px;top:233.5px;width:154.2px;height:25px;background:#ececec;"></div>
<span class="t" style="top:239.10px;font-size:13px;color:#5c5c5c;font-weight:700;left:22.60px;transform-origin:0 50%;transform:scaleX(1.0377);">Paste Values</span>
<div class="a" style="left:11.5px;top:296px;width:154.2px;height:25.5px;background:#ececec;"></div>
<span class="t" style="top:302.10px;font-size:13px;color:#5c5c5c;font-weight:700;left:22.60px;transform-origin:0 50%;transform:scaleX(1.0541);">Other Paste Options</span>
<div class="a" style="left:13px;top:357.5px;width:152px;height:1px;background:#e1e1e1;"></div>
<span class="t" style="top:366.00px;font-size:13px;color:#444;left:49.00px;transform-origin:0 50%;">Paste <u>S</u>pecial...</span>
<div class="a" style="left:120px;top:163.6px;width:34px;height:33px;background:#dddbd9;"></div>
<svg class="a" style="left:0px;top:0px;" width="700" height="508" viewBox="0 0 700 508"><rect x="21.2" y="171.5" width="17" height="17.8" rx="1.6" fill="#e8bd7a"/><rect x="23.6" y="173.2" width="12.4" height="1.5" fill="#fff"/><rect x="27.1" y="168.8" width="5.8" height="3.6" rx="1.8" fill="#6f6f6f"/><rect x="24.5" y="171.3" width="10.9" height="2.2" rx="0.6" fill="#6f6f6f"/><rect x="29.3" y="170.1" width="1.5" height="1.3" fill="#eee"/><rect x="30.2" y="176.6" width="11.8" height="13" fill="#fff"/><path d="M31.5 178 H37.4 L40.5 181.1 V190 H31.5Z" fill="#fff" stroke="#6a6a6a" stroke-width="1"/><path d="M37.4 178.2 V181.1 H40.3" fill="none" stroke="#6a6a6a" stroke-width="0.9"/><rect x="57" y="171.5" width="17" height="17.8" rx="1.6" fill="#e8bd7a"/><rect x="60.1" y="173.3" width="11.5" height="13.2" fill="#fff"/><rect x="62.9" y="168.8" width="5.8" height="3.6" rx="1.8" fill="#6f6f6f"/><rect x="60.3" y="171.3" width="10.9" height="2.2" rx="0.6" fill="#6f6f6f"/><rect x="65.1" y="170.1" width="1.5" height="1.3" fill="#eee"/><rect x="65.6" y="174.6" width="12" height="16.4" fill="#fff"/><text x="66.2" y="186.3" font-size="17" fill="#505050" font-family="Liberation Serif,serif" font-style="italic">f</text><text x="70.1" y="189.5" font-size="13.5" fill="#505050" font-family="Liberation Serif,serif" font-style="italic">x</text><rect x="92.2" y="171.5" width="17" height="17.8" rx="1.6" fill="#e8bd7a"/><rect x="95.3" y="173.3" width="11.5" height="13.2" fill="#fff"/><rect x="98.1" y="168.8" width="5.8" height="3.6" rx="1.8" fill="#6f6f6f"/><rect x="95.5" y="171.3" width="10.9" height="2.2" rx="0.6" fill="#6f6f6f"/><rect x="100.3" y="170.1" width="1.5" height="1.3" fill="#eee"/><rect x="103.3" y="174.6" width="10" height="16.4" fill="#fff"/><text x="95.8" y="183.1" font-size="10.4" fill="#3a3a3a" stroke="#3a3a3a" stroke-width="0.15" textLength="7.9" lengthAdjust="spacingAndGlyphs" font-family="Liberation Sans,sans-serif">%</text><text x="103.3" y="186.6" font-size="15.5" fill="#505050" font-family="Liberation Serif,serif" font-style="italic">f</text><text x="107.2" y="189.8" font-size="12" fill="#505050" font-family="Liberation Serif,serif" font-style="italic">x</text><rect x="128" y="171.5" width="17" height="17.8" rx="1.6" fill="#e8bd7a"/><rect x="131.1" y="173.3" width="11.5" height="13.2" fill="#fff"/><rect x="133.9" y="168.8" width="5.8" height="3.6" rx="1.8" fill="#6f6f6f"/><rect x="131.3" y="171.3" width="10.9" height="2.2" rx="0.6" fill="#6f6f6f"/><rect x="136.1" y="170.1" width="1.5" height="1.3" fill="#eee"/><rect x="130.3" y="173.9" width="12" height="15.4" fill="#fff"/><path d="M131.4 176.1 H140.6" stroke="#4a86d0" stroke-width="1.1" stroke-dasharray="1.4 0.5"/><path d="M131.4 178.5 H140.6" stroke="#d9534f" stroke-width="1.3" stroke-dasharray="1.2 0.5"/><path d="M131.4 181.5 H138 M131.4 183.6 H136" stroke="#3a78c3" stroke-width="1.1"/><g transform="translate(131.4,190) scale(1.0)"><path d="M15.7 -15.3 L17 -14.3 L12.7 -6.2 L9.7 -8.1Z" fill="#5a5a5a"/><path d="M10 -6.6 C7.1 -6 4.1 -4 0 0 C3.6 1 9.1 0.8 11.2 -2.6 C11.9 -4 11.5 -5.7 10 -6.6Z" fill="#3a78c3"/></g><rect x="21.1" y="207.0" width="17" height="17.8" rx="1.6" fill="#e8bd7a"/><rect x="24.2" y="208.8" width="11.5" height="13.2" fill="#fff"/><rect x="27.0" y="204.3" width="5.8" height="3.6" rx="1.8" fill="#6f6f6f"/><rect x="24.4" y="206.8" width="10.9" height="2.2" rx="0.6" fill="#6f6f6f"/><rect x="29.2" y="205.6" width="1.5" height="1.3" fill="#eee"/><rect x="28" y="212.4" width="14" height="14" fill="#fff"/><rect x="29.5" y="213.9" width="11" height="11" fill="none" stroke="#555" stroke-width="1" stroke-dasharray="1.2 1"/><path d="M35 215.5 V223.5 M31 219.5 H39" stroke="#b0b0b0" stroke-width="1" stroke-dasharray="1 1"/><rect x="57.2" y="207.0" width="17" height="17.8" rx="1.6" fill="#e8bd7a"/><rect x="60.3" y="208.8" width="11.5" height="13.2" fill="#fff"/><rect x="63.1" y="204.3" width="5.8" height="3.6" rx="1.8" fill="#6f6f6f"/><rect x="60.5" y="206.8" width="10.9" height="2.2" rx="0.6" fill="#6f6f6f"/><rect x="65.3" y="205.6" width="1.5" height="1.3" fill="#eee"/><rect x="62" y="212" width="16" height="14.5" fill="#fff"/><path d="M65.1 225.3 V220.5 H75.1 V225.3" fill="none" stroke="#5a5a5a" stroke-width="1.1"/><path d="M63.8 216 H68.4 M66 213.8 L63.7 216 L66 218.2 M71.6 216 H76.4 M74.2 213.8 L76.5 216 L74.2 218.2" stroke="#2b6cc4" stroke-width="1.3" fill="none"/><rect x="92.6" y="207.0" width="17" height="17.8" rx="1.6" fill="#e8bd7a"/><rect x="95.7" y="208.8" width="11.5" height="13.2" fill="#fff"/><rect x="98.5" y="204.3" width="5.8" height="3.6" rx="1.8" fill="#6f6f6f"/><rect x="95.9" y="206.8" width="10.9" height="2.2" rx="0.6" fill="#6f6f6f"/><rect x="100.7" y="205.6" width="1.5" height="1.3" fill="#eee"/><rect x="97" y="212" width="16" height="14.5" fill="#fff"/><rect x="107.4" y="213.2" width="4.2" height="3.4" fill="#7a7a7a"/><rect x="107.4" y="213.2" width="4.2" height="7" fill="none" stroke="#5a5a5a" stroke-width="0.9"/><rect x="98.4" y="221.6" width="4" height="3.4" fill="#7a7a7a"/><rect x="98.4" y="221.6" width="8.2" height="3.4" fill="none" stroke="#5a5a5a" stroke-width="0.9"/><path d="M100.4 218.8 C100.6 215.6 102.4 214.4 105 214.2 M103.2 212.6 L105.3 214.2 L103.4 216 M100.4 218.8 M98.9 217 L100.4 219 L102.2 217.4" stroke="#2b6cc4" stroke-width="1.2" fill="none"/><rect x="21.1" y="269.3" width="17" height="17.8" rx="1.6" fill="#e8bd7a"/><rect x="24.2" y="271.1" width="11.5" height="13.2" fill="#fff"/><rect x="27.0" y="266.6" width="5.8" height="3.6" rx="1.8" fill="#6f6f6f"/><rect x="24.4" y="269.1" width="10.9" height="2.2" rx="0.6" fill="#6f6f6f"/><rect x="29.2" y="267.9" width="1.5" height="1.3" fill="#eee"/><rect x="25.0" y="280.7" width="16.5" height="9.6" fill="#fff"/><text x="25.8" y="288.3" font-size="10" fill="#2e2e2e" stroke="#2e2e2e" stroke-width="0.2" font-family="Liberation Sans,sans-serif" textLength="15.4" lengthAdjust="spacingAndGlyphs">123</text><rect x="57.1" y="269.3" width="17" height="17.8" rx="1.6" fill="#e8bd7a"/><rect x="60.2" y="271.1" width="11.5" height="13.2" fill="#fff"/><rect x="63.0" y="266.6" width="5.8" height="3.6" rx="1.8" fill="#6f6f6f"/><rect x="60.4" y="269.1" width="10.9" height="2.2" rx="0.6" fill="#6f6f6f"/><rect x="65.2" y="267.9" width="1.5" height="1.3" fill="#eee"/><rect x="61.0" y="280.7" width="16.5" height="9.6" fill="#fff"/><text x="61.8" y="288.3" font-size="10" fill="#2e2e2e" stroke="#2e2e2e" stroke-width="0.2" font-family="Liberation Sans,sans-serif" textLength="15.4" lengthAdjust="spacingAndGlyphs">123</text><text x="61" y="279.8" font-size="10.4" fill="#3a3a3a" stroke="#3a3a3a" stroke-width="0.15" textLength="7.9" lengthAdjust="spacingAndGlyphs" font-family="Liberation Sans,sans-serif">%</text><rect x="92.7" y="269.3" width="17" height="17.8" rx="1.6" fill="#e8bd7a"/><rect x="95.8" y="271.1" width="11.5" height="13.2" fill="#fff"/><rect x="98.6" y="266.6" width="5.8" height="3.6" rx="1.8" fill="#6f6f6f"/><rect x="96.0" y="269.1" width="10.9" height="2.2" rx="0.6" fill="#6f6f6f"/><rect x="100.8" y="267.9" width="1.5" height="1.3" fill="#eee"/><rect x="96.6" y="280.7" width="16.5" height="9.6" fill="#fff"/><text x="97.4" y="288.3" font-size="10" fill="#2e2e2e" stroke="#2e2e2e" stroke-width="0.2" font-family="Liberation Sans,sans-serif" textLength="15.4" lengthAdjust="spacingAndGlyphs">123</text><g transform="translate(98.1,280.6) scale(0.7)"><path d="M15.7 -15.3 L17 -14.3 L12.7 -6.2 L9.7 -8.1Z" fill="#5a5a5a"/><path d="M10 -6.6 C7.1 -6 4.1 -4 0 0 C3.6 1 9.1 0.8 11.2 -2.6 C11.9 -4 11.5 -5.7 10 -6.6Z" fill="#3a78c3"/></g><rect x="21.5" y="332.2" width="17" height="17.8" rx="1.6" fill="#e8bd7a"/><rect x="24.6" y="334.0" width="11.5" height="13.2" fill="#fff"/><rect x="27.4" y="329.5" width="5.8" height="3.6" rx="1.8" fill="#6f6f6f"/><rect x="24.8" y="332.0" width="10.9" height="2.2" rx="0.6" fill="#6f6f6f"/><rect x="29.6" y="330.8" width="1.5" height="1.3" fill="#eee"/><text x="25.6" y="343.4" font-size="10.4" fill="#3a3a3a" stroke="#3a3a3a" stroke-width="0.15" textLength="7.9" lengthAdjust="spacingAndGlyphs" font-family="Liberation Sans,sans-serif">%</text><g transform="translate(25.8,350) scale(0.94)"><path d="M15.7 -15.3 L17 -14.3 L12.7 -6.2 L9.7 -8.1Z" fill="#5a5a5a"/><path d="M10 -6.6 C7.1 -6 4.1 -4 0 0 C3.6 1 9.1 0.8 11.2 -2.6 C11.9 -4 11.5 -5.7 10 -6.6Z" fill="#3a78c3"/></g><rect x="57.3" y="332.2" width="17" height="17.8" rx="1.6" fill="#e8bd7a"/><rect x="60.4" y="334.0" width="11.5" height="13.2" fill="#fff"/><rect x="63.2" y="329.5" width="5.8" height="3.6" rx="1.8" fill="#6f6f6f"/><rect x="60.6" y="332.0" width="10.9" height="2.2" rx="0.6" fill="#6f6f6f"/><rect x="65.4" y="330.8" width="1.5" height="1.3" fill="#eee"/><rect x="62.2" y="342.6" width="15" height="9" fill="#fff"/><rect x="63.8" y="344.3" width="7.4" height="5.6" rx="2.8" fill="none" stroke="#2b6cc4" stroke-width="1.6"/><rect x="68.6" y="344.3" width="7.4" height="5.6" rx="2.8" fill="none" stroke="#2b6cc4" stroke-width="1.6"/><rect x="92.2" y="332.2" width="17" height="17.8" rx="1.6" fill="#e8bd7a"/><rect x="95.3" y="334.0" width="11.5" height="13.2" fill="#fff"/><rect x="98.1" y="329.5" width="5.8" height="3.6" rx="1.8" fill="#6f6f6f"/><rect x="95.5" y="332.0" width="10.9" height="2.2" rx="0.6" fill="#6f6f6f"/><rect x="100.3" y="330.8" width="1.5" height="1.3" fill="#eee"/><rect x="99" y="338" width="14" height="13" fill="#fff"/><rect x="100.2" y="339.2" width="11.6" height="10.6" fill="#fff" stroke="#505050" stroke-width="1"/><path d="M101.8 348.4 L104.8 343.8 L106.6 346.4 L107.8 345 L110.2 348.4Z" fill="#2b6cc4"/><circle cx="108" cy="342" r="1" fill="#e8a33d"/><rect x="128" y="332.2" width="17" height="17.8" rx="1.6" fill="#e8bd7a"/><rect x="131.1" y="334.0" width="11.5" height="13.2" fill="#fff"/><rect x="133.9" y="329.5" width="5.8" height="3.6" rx="1.8" fill="#6f6f6f"/><rect x="131.3" y="332.0" width="10.9" height="2.2" rx="0.6" fill="#6f6f6f"/><rect x="136.1" y="330.8" width="1.5" height="1.3" fill="#eee"/><rect x="134.4" y="334.2" width="13.6" height="12.6" fill="#fff"/><rect x="135.6" y="335.4" width="11.4" height="10.4" fill="#fff" stroke="#9a9a9a" stroke-width="1"/><path d="M137 344.6 L140 340 L141.8 342.6 L143 341.2 L145.4 344.6Z" fill="#8db4e2"/><circle cx="143.6" cy="338" r="1" fill="#e8a33d"/><rect x="130.8" y="342.6" width="0" height="0" fill="#fff"/><rect x="132.4" y="344.3" width="7.4" height="5.6" rx="2.8" fill="none" stroke="#2b6cc4" stroke-width="1.6"/><rect x="137.2" y="344.3" width="7.4" height="5.6" rx="2.8" fill="none" stroke="#2b6cc4" stroke-width="1.6"/></svg>
<div class="a" style="left:118.5px;top:208.3px;width:161.4px;height:26.8px;background:#fff;border:1px solid #bebebe;box-sizing:border-box;box-shadow:1px 2px 4px rgba(0,0,0,0.3)"></div>
<span class="t" style="top:217.02px;font-size:12.5px;color:#5c5c5c;left:124.30px;transform-origin:0 50%;transform:scaleX(0.9671);">Keep Source Formatting (K)</span>
<div class="a" style="left:70px;top:12px;width:66px;height:38.5px;border:4px solid #ff0000;box-sizing:border-box"></div>
<div class="a" style="left:9.3px;top:50.5px;width:52.3px;height:85.5px;border:4px solid #ff0000;box-sizing:border-box"></div>
<div class="a" style="left:115.8px;top:160px;width:42.5px;height:40px;border:3.7px solid #ff0000;box-sizing:border-box"></div>
<svg class="a" style="left:0px;top:0px;" width="700" height="508" viewBox="0 0 700 508"><path d="M209.2 153.1 L164 171.6" stroke="#ff0000" stroke-width="3.1" fill="none"/><path d="M158.6 173.9 L165.8 166.4 L165.2 170.6 L170.2 175.8Z" fill="#ff0000" stroke="#ff0000" stroke-width="0.8" stroke-linejoin="round"/></svg>
<span class="t" style="top:438.74px;font-size:27px;color:#fff;font-weight:700;-webkit-text-stroke:6px #fff;text-shadow:2px 3px 3px rgba(0,0,0,0.6);left:380.50px;transform-origin:0 50%;transform:scaleX(0.8254);">ThuThuat</span>
<span class="t" style="top:438.74px;font-size:27px;color:#fff;font-weight:700;-webkit-text-stroke:6px #fff;text-shadow:2px 3px 3px rgba(0,0,0,0.6);left:482.50px;transform-origin:0 50%;transform:scaleX(0.8665);">PhanMem</span>
<span class="t" style="top:438.74px;font-size:27px;color:#fff;font-weight:700;-webkit-text-stroke:6px #fff;text-shadow:2px 3px 3px rgba(0,0,0,0.6);left:596.40px;transform-origin:0 50%;transform:scaleX(0.7689);">.vn</span>
<span class="t" style="top:438.74px;font-size:27px;color:#ee2447;font-weight:700;-webkit-text-stroke:1.1px #ee2447;left:380.50px;transform-origin:0 50%;transform:scaleX(0.8254);">ThuThuat</span>
<span class="t" style="top:438.74px;font-size:27px;color:#1e9bea;font-weight:700;-webkit-text-stroke:1.1px #1e9bea;left:482.50px;transform-origin:0 50%;transform:scaleX(0.8665);">PhanMem</span>
<span class="t" style="top:438.74px;font-size:27px;color:#22569e;font-weight:700;-webkit-text-stroke:1.1px #22569e;left:596.40px;transform-origin:0 50%;transform:scaleX(0.7689);">.vn</span>
<div class="a" style="left:0px;top:0px;width:700px;height:1px;background:#a3a3a3;"></div>
<div class="a" style="left:0px;top:0px;width:1.4px;height:508px;background:#a3a3a3;"></div>
</body></html>
